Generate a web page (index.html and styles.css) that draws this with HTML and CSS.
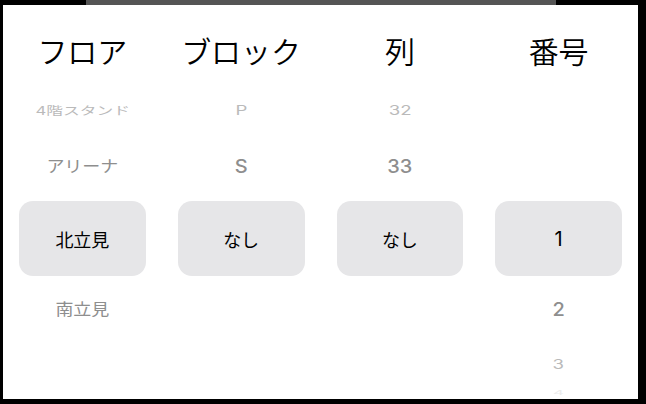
FILE: index.html
```html
<!DOCTYPE html>
<html lang="ja">
<head>
<meta charset="utf-8">
<title>Seat Picker</title>
<link rel="stylesheet" href="styles.css">
</head>
<body>
<div class="topbar"><div class="notch"></div></div>
<div class="frame">
  <div class="headers">
    <div class="h">フロア</div>
    <div class="h">ブロック</div>
    <div class="h">列</div>
    <div class="h">番号</div>
  </div>
  <div class="pickers">
    <div class="col">
      <div class="row far"><span>4階スタンド</span></div>
      <div class="row near"><span>アリーナ</span></div>
      <div class="sel">北立見</div>
      <div class="row near"><span>南立見</span></div>
      <div class="row far"></div>
      <div class="row farther"></div>
    </div>
    <div class="col">
      <div class="row far num"><span>P</span></div>
      <div class="row near num"><span>S</span></div>
      <div class="sel">なし</div>
      <div class="row near"></div>
      <div class="row far"></div>
      <div class="row farther"></div>
    </div>
    <div class="col">
      <div class="row far num"><span>32</span></div>
      <div class="row near num"><span>33</span></div>
      <div class="sel">なし</div>
      <div class="row near"></div>
      <div class="row far"></div>
      <div class="row farther"></div>
    </div>
    <div class="col">
      <div class="row far"></div>
      <div class="row near"></div>
      <div class="sel num">1</div>
      <div class="row near num"><span>2</span></div>
      <div class="row far num"><span>3</span></div>
      <div class="row farther num"><span>4</span></div>
    </div>
  </div>
</div>
</body>
</html>
```
FILE: styles.css
```css
html, body {
  margin: 0;
  padding: 0;
}
body {
  width: 646px;
  height: 404px;
  background: #000;
  overflow: hidden;
  font-family: "Inter", "Noto Sans CJK JP", sans-serif;
}
.topbar {
  height: 5px;
}
.notch {
  margin-left: 86px;
  width: 470px;
  height: 5px;
  background: #555555;
}
.frame {
  margin-left: 3px;
  width: 635px;
  height: 394px;
  background: #fff;
  overflow: hidden;
}
.headers {
  display: grid;
  grid-template-columns: repeat(4, 1fr);
  padding-top: 27px;
}
.h {
  text-align: center;
  font-family: "Noto Sans CJK JP", sans-serif;
  font-size: 30px;
  font-weight: 350;
  line-height: 36px;
  color: #000;
}
.pickers {
  display: grid;
  grid-template-columns: repeat(4, 1fr);
  margin-top: 15px;
}
.col {
  display: flex;
  flex-direction: column;
}
.row {
  display: flex;
  align-items: center;
  justify-content: center;
  font-size: 18px;
  line-height: 22px;
}
.row span {
  display: inline-block;
  white-space: nowrap;
}
.row.far {
  height: 56px;
  color: #bababa;
}
.row.far span {
  transform: scale(0.93, 0.64);
}
.col .row.far:nth-child(5) {
  height: 54px;
}
.row.near {
  height: 56px;
  color: #8e8e8e;
}
.row.near span {
  transform: scale(1, 0.9);
}
.row.farther {
  height: 2px;
  color: #ececec;
}
.row.farther span {
  transform: scale(0.85, 0.3);
}
.num {
  font-size: 20px;
}
.row.num.near {
  font-weight: 500;
}
.sel {
  margin: 6px 16px;
  height: 75px;
  border-radius: 14px;
  background: #e6e6e8;
  display: flex;
  align-items: center;
  justify-content: center;
  font-size: 18px;
  color: #000;
}
.sel.num {
  font-size: 20px;
}
```
